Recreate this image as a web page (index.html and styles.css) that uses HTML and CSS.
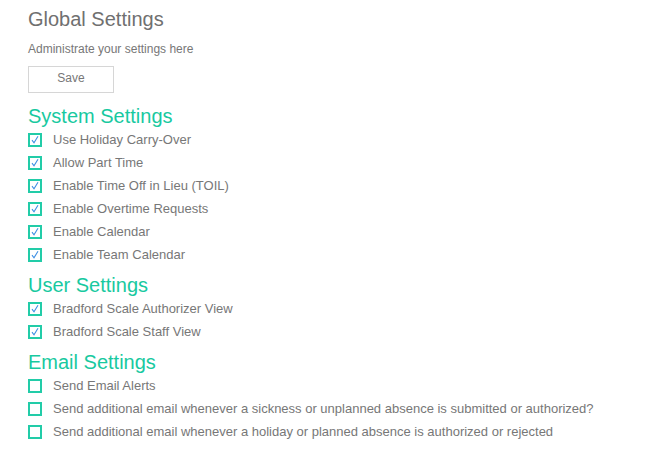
FILE: index.html
```html
<!DOCTYPE html>
<html>
<head>
<meta charset="utf-8">
<link rel="stylesheet" href="styles.css">
</head>
<body>
<div class="page">
  <h1 class="title">Global Settings</h1>
  <p class="subtitle">Administrate your settings here</p>
  <button class="save">Save</button>

  <h2 class="section">System Settings</h2>
  <ul class="list">
    <li class="item"><span class="box checked"><svg viewBox="0 0 10 10"><path d="M2 5.2 L4 7.8 L8 1.2"/></svg></span>Use Holiday Carry-Over</li>
    <li class="item"><span class="box checked"><svg viewBox="0 0 10 10"><path d="M2 5.2 L4 7.8 L8 1.2"/></svg></span>Allow Part Time</li>
    <li class="item"><span class="box checked"><svg viewBox="0 0 10 10"><path d="M2 5.2 L4 7.8 L8 1.2"/></svg></span>Enable Time Off in Lieu (TOIL)</li>
    <li class="item"><span class="box checked"><svg viewBox="0 0 10 10"><path d="M2 5.2 L4 7.8 L8 1.2"/></svg></span>Enable Overtime Requests</li>
    <li class="item"><span class="box checked"><svg viewBox="0 0 10 10"><path d="M2 5.2 L4 7.8 L8 1.2"/></svg></span>Enable Calendar</li>
    <li class="item"><span class="box checked"><svg viewBox="0 0 10 10"><path d="M2 5.2 L4 7.8 L8 1.2"/></svg></span>Enable Team Calendar</li>
  </ul>

  <h2 class="section section-user">User Settings</h2>
  <ul class="list">
    <li class="item"><span class="box checked"><svg viewBox="0 0 10 10"><path d="M2 5.2 L4 7.8 L8 1.2"/></svg></span>Bradford Scale Authorizer View</li>
    <li class="item"><span class="box checked"><svg viewBox="0 0 10 10"><path d="M2 5.2 L4 7.8 L8 1.2"/></svg></span>Bradford Scale Staff View</li>
  </ul>

  <h2 class="section section-email">Email Settings</h2>
  <ul class="list">
    <li class="item"><span class="box"></span>Send Email Alerts</li>
    <li class="item"><span class="box"></span>Send additional email whenever a sickness or unplanned absence is submitted or authorized?</li>
    <li class="item"><span class="box"></span>Send additional email whenever a holiday or planned absence is authorized or rejected</li>
  </ul>
</div>
</body>
</html>
```
FILE: styles.css
```css
html, body {
  margin: 0;
  padding: 0;
  background: #fff;
}
body {
  font-family: "Liberation Sans", Arial, sans-serif;
  color: #777;
}
.page {
  padding: 7px 0 0 28px;
}
.title {
  margin: 0;
  font-size: 20px;
  font-weight: normal;
  line-height: 24px;
  color: #707070;
}
.subtitle {
  margin: 11px 0 0 0;
  font-size: 12px;
  line-height: 14px;
  color: #777;
}
.save {
  display: block;
  margin: 10px 0 0 0;
  width: 86px;
  height: 27px;
  padding: 0 0 4px 0;
  background: #fff;
  border: 1px solid #d6d6d6;
  font-family: "Liberation Sans", Arial, sans-serif;
  font-size: 12px;
  color: #777;
}
.section {
  margin: 12px 0 0 0;
  font-size: 20px;
  font-weight: normal;
  line-height: 23px;
  color: #18c9a0;
}
.section-user {
  margin-top: 8px;
}
.section-email {
  margin-top: 8px;
}
.list {
  list-style: none;
  margin: 0;
  padding: 0;
}
.item {
  display: flex;
  align-items: center;
  height: 23px;
  font-size: 13px;
  color: #777;
}
.box {
  box-sizing: border-box;
  width: 14px;
  height: 14px;
  border: 2px solid #22cca8;
  margin-right: 11px;
  flex: none;
  display: flex;
}
.box svg {
  width: 10px;
  height: 10px;
  fill: none;
  stroke: #3f8fe3;
  stroke-width: 1.1;
}
```
